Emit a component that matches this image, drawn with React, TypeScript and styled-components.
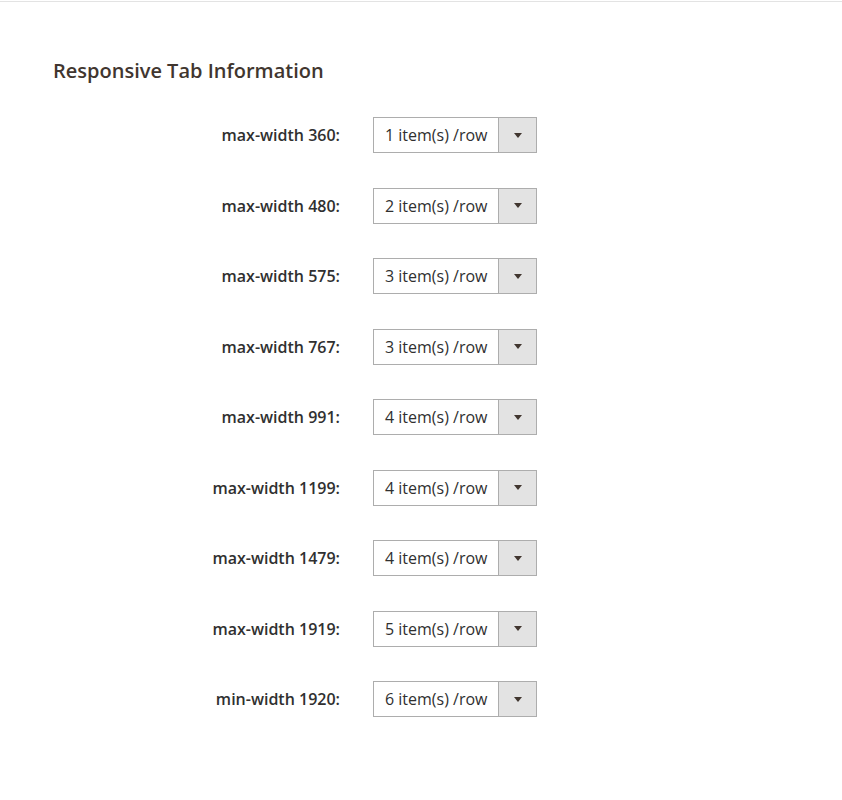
import styled, { createGlobalStyle } from "styled-components"

const GlobalStyle = createGlobalStyle`
  html, body {
    margin: 0;
    padding: 0;
    background: #ffffff;
  }
  body {
    font-family: "Open Sans", "Liberation Sans", sans-serif;
    color: #303030;
  }
`

const rows = [
  { label: "max-width 360:", value: "1 item(s) /row" },
  { label: "max-width 480:", value: "2 item(s) /row" },
  { label: "max-width 575:", value: "3 item(s) /row" },
  { label: "max-width 767:", value: "3 item(s) /row" },
  { label: "max-width 991:", value: "4 item(s) /row" },
  { label: "max-width 1199:", value: "4 item(s) /row" },
  { label: "max-width 1479:", value: "4 item(s) /row" },
  { label: "max-width 1919:", value: "5 item(s) /row" },
  { label: "min-width 1920:", value: "6 item(s) /row" },
]

export default function App() {
  return (
    <Page>
      <GlobalStyle />
      <TopRule />
      <Fieldset>
        <Legend>Responsive Tab Information</Legend>
        <Fields>
          {rows.map((row) => (
            <Field key={row.label}>
              <Label>{row.label}</Label>
              <Select>
                <SelectValue>{row.value}</SelectValue>
                <SelectArrow>
                  <Caret />
                </SelectArrow>
              </Select>
            </Field>
          ))}
        </Fields>
      </Fieldset>
    </Page>
  )
}

const Page = styled.div`
  width: 100%;
  min-height: 800px;
  padding-top: 1px;
  box-sizing: border-box;
`

const TopRule = styled.div`
  height: 1px;
  background: #e3e3e3;
`

const Fieldset = styled.div`
  padding: 55px 0 0 53px;
`

const Legend = styled.h2`
  margin: 0 0 32px 0;
  font-size: 20px;
  line-height: 28px;
  font-weight: 600;
  color: #41362f;
`

const Fields = styled.div`
  display: flex;
  flex-direction: column;
  gap: 34.5px;
`

const Field = styled.div`
  display: grid;
  grid-template-columns: 287px 164px;
  column-gap: 33px;
  align-items: center;
`

const Label = styled.label`
  text-align: right;
  font-size: 16px;
  font-weight: 600;
  color: #303030;
`

const Select = styled.div`
  display: flex;
  height: 36px;
  box-sizing: border-box;
  border: 1px solid #adadad;
  background: #ffffff;
`

const SelectValue = styled.div`
  flex: 1;
  display: flex;
  align-items: center;
  padding-left: 11px;
  font-size: 16px;
  color: #303030;
`

const SelectArrow = styled.div`
  width: 37px;
  display: flex;
  align-items: center;
  justify-content: center;
  background: #e3e3e3;
  border-left: 1px solid #adadad;
`

const Caret = styled.span`
  width: 0;
  height: 0;
  border-left: 4px solid transparent;
  border-right: 4px solid transparent;
  border-top: 5px solid #41362f;
`
